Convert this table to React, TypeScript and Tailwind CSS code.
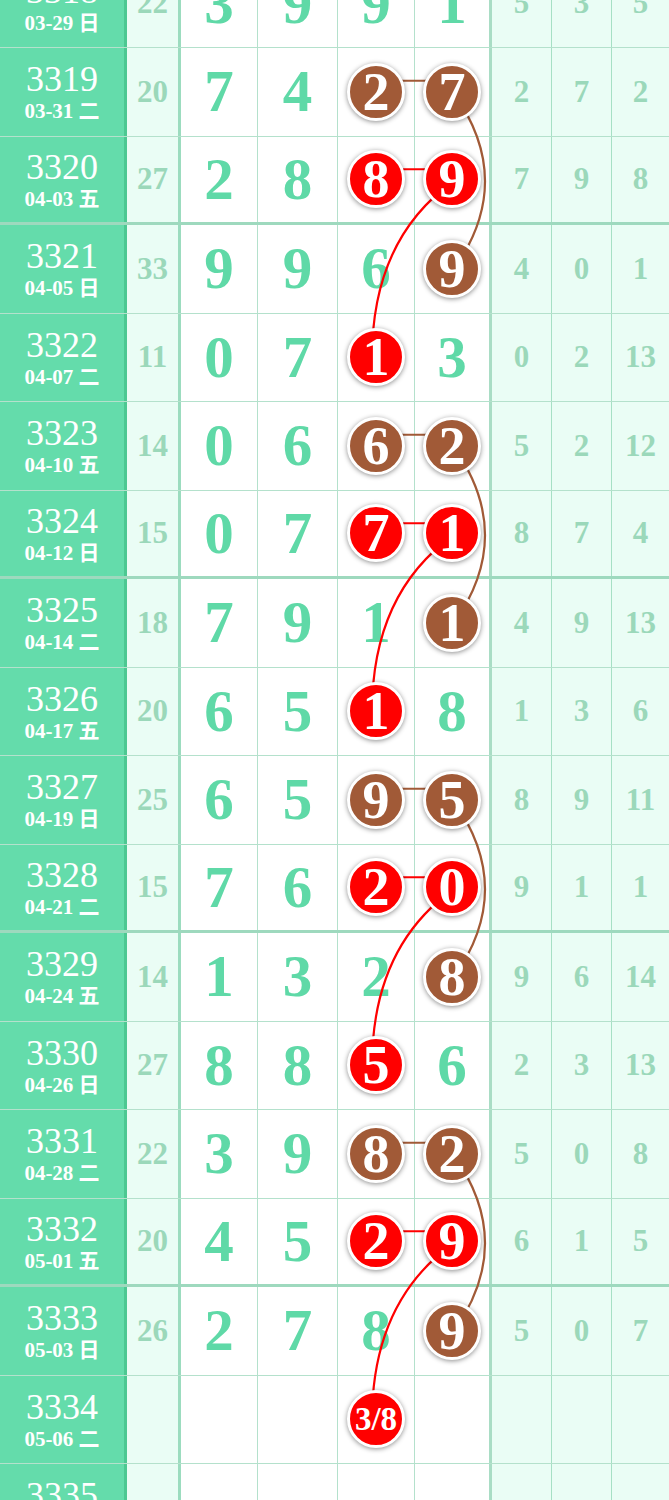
import React from 'react';

type Row = { no: string; date: string; sum: string; d: number[]; r: number[] };

const rows: Row[] = [
  { no: '3318', date: '03-29 日', sum: '22', d: [3, 9, 9, 1], r: [5, 3, 5] },
  { no: '3319', date: '03-31 二', sum: '20', d: [7, 4, 2, 7], r: [2, 7, 2] },
  { no: '3320', date: '04-03 五', sum: '27', d: [2, 8, 8, 9], r: [7, 9, 8] },
  { no: '3321', date: '04-05 日', sum: '33', d: [9, 9, 6, 9], r: [4, 0, 1] },
  { no: '3322', date: '04-07 二', sum: '11', d: [0, 7, 1, 3], r: [0, 2, 13] },
  { no: '3323', date: '04-10 五', sum: '14', d: [0, 6, 6, 2], r: [5, 2, 12] },
  { no: '3324', date: '04-12 日', sum: '15', d: [0, 7, 7, 1], r: [8, 7, 4] },
  { no: '3325', date: '04-14 二', sum: '18', d: [7, 9, 1, 1], r: [4, 9, 13] },
  { no: '3326', date: '04-17 五', sum: '20', d: [6, 5, 1, 8], r: [1, 3, 6] },
  { no: '3327', date: '04-19 日', sum: '25', d: [6, 5, 9, 5], r: [8, 9, 11] },
  { no: '3328', date: '04-21 二', sum: '15', d: [7, 6, 2, 0], r: [9, 1, 1] },
  { no: '3329', date: '04-24 五', sum: '14', d: [1, 3, 2, 8], r: [9, 6, 14] },
  { no: '3330', date: '04-26 日', sum: '27', d: [8, 8, 5, 6], r: [2, 3, 13] },
  { no: '3331', date: '04-28 二', sum: '22', d: [3, 9, 8, 2], r: [5, 0, 8] },
  { no: '3332', date: '05-01 五', sum: '20', d: [4, 5, 2, 9], r: [6, 1, 5] },
  { no: '3333', date: '05-03 日', sum: '26', d: [2, 7, 8, 9], r: [5, 0, 7] },
  { no: '3334', date: '05-06 二', sum: '', d: [], r: [] },
  { no: '3335', date: '05-09 五', sum: '', d: [], r: [] },
];

const ROW_H = 88.5;
const rowCenter = (i: number) => 44.25 + ROW_H * i;

// ball colour for the last two digit columns (c = 2, 3), by position in the 4-row group
const ballFor = (i: number, c: number): 'b' | 'r' | null => {
  if (i < 1 || i > 16 || c < 2) return null;
  const k = (i - 1) % 4;
  if (k === 0) return 'b';
  if (k === 1) return 'r';
  if (k === 2) return c === 3 ? 'b' : null;
  return c === 2 ? 'r' : null;
};

const thickRow = (i: number) => i >= 2 && (i - 2) % 4 === 0;

const serif = "font-['Liberation_Serif','Noto_Sans_CJK_SC',serif]";

function Ball({ color, children, small }: { color: 'b' | 'r'; children: React.ReactNode; small?: boolean }) {
  return (
    <div
      className={`relative z-20 w-[58px] h-[58px] rounded-full border-[3px] border-white flex items-center justify-center text-white font-bold leading-none shadow-[0_1px_5px_rgba(0,0,0,0.45)] ${
        color === 'b' ? 'bg-[#a15a37]' : 'bg-[#ff0000]'
      } ${small ? 'text-[33px]' : 'text-[54px]'}`}
    >
      {children}
    </div>
  );
}

export default function App() {
  const curves: { d: string; c: string }[] = [];
  for (let g = 0; g < 4; g++) {
    const a = 1 + g * 4;
    const yA = rowCenter(a);
    const yB = rowCenter(a + 1);
    curves.push({ d: `M 376.5 ${yA - 12} L 453.5 ${yA - 12}`, c: '#a15a37' });
    curves.push({ d: `M 376.5 ${yB - 12} L 453.5 ${yB - 12}`, c: '#ff0000' });
    curves.push({ d: `M 453.5 ${yA} Q 516.5 ${yA + 88.5} 453.5 ${yA + 177}`, c: '#a15a37' });
    curves.push({ d: `M 453.5 ${yB} C 405 ${yB + 34.5} 372 ${yB + 89.5} 372 ${yB + 177}`, c: '#ff0000' });
  }

  return (
    <div className={`w-[669px] h-[1500px] overflow-hidden bg-white ${serif}`}>
      <div className="relative -mt-[40.5px]">
        {rows.map((row, i) => (
          <div
            key={row.no}
            className={`flex h-[88.5px] border-[#28aa6e]/35 ${thickRow(i) ? 'border-b-[3px] border-[#28aa6e]/45' : 'border-b'}`}
          >
            {/* issue + date */}
            <div className="w-[127px] shrink-0 bg-[#64dcab] border-r-[3px] border-[#28aa6e]/40 flex flex-col items-center justify-center gap-[4px] text-white">
              <div className="text-[36px] leading-none">{row.no}</div>
              <div className="text-[21px] leading-none font-bold">{row.date}</div>
            </div>
            {/* sum */}
            <div className="w-[54px] shrink-0 bg-[#eafdf5] border-r-[3px] border-[#28aa6e]/40 flex items-center justify-center text-[31px] font-bold text-[#9bd8ba]">
              {row.sum}
            </div>
            {/* digits */}
            {[77, 80, 77, 77].map((w, c) => {
              const ball = ballFor(i, c);
              const val = row.d[c];
              const label = i === 16 && c === 2 ? '3/8' : val;
              return (
                <div
                  key={c}
                  style={{ width: w }}
                  className={`shrink-0 flex items-center justify-center ${c === 3 ? 'border-r-[3px] border-[#28aa6e]/40' : 'border-r border-[#28aa6e]/35'}`}
                >
                  {ball ? (
                    <Ball color={ball} small={i === 16}>
                      {label}
                    </Ball>
                  ) : (
                    <span className="text-[59px] font-bold leading-none text-[#5fd9a7]">{val}</span>
                  )}
                </div>
              );
            })}
            {/* right stats */}
            {[60, 60, 57].map((w, c) => (
              <div
                key={c}
                style={{ width: w }}
                className={`shrink-0 bg-[#eafdf5] flex items-center justify-center text-[31px] font-bold text-[#9bd8ba] ${c < 2 ? 'border-r border-[#28aa6e]/35' : ''}`}
              >
                {row.r[c]}
              </div>
            ))}
          </div>
        ))}

        <svg className="absolute left-0 top-0 z-10 pointer-events-none" width={669} height={rows.length * ROW_H}>
          {curves.map((p, k) => (
            <path key={k} d={p.d} fill="none" stroke={p.c} strokeWidth={2.2} />
          ))}
        </svg>
      </div>
    </div>
  );
}
